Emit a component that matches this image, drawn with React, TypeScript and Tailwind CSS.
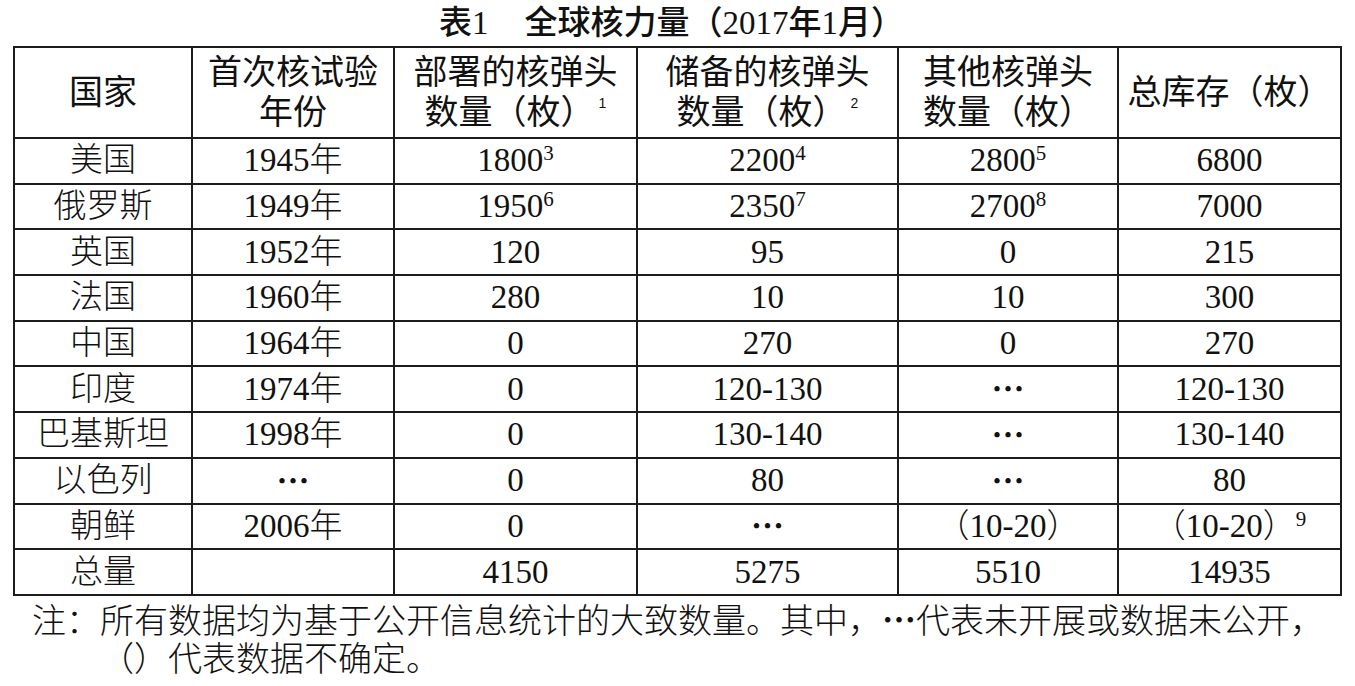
import React from "react";

type Val = string | { v: string; sup: string };

const rows: Val[][] = [
  ["美国", "1945年", { v: "1800", sup: "3" }, { v: "2200", sup: "4" }, { v: "2800", sup: "5" }, "6800"],
  ["俄罗斯", "1949年", { v: "1950", sup: "6" }, { v: "2350", sup: "7" }, { v: "2700", sup: "8" }, "7000"],
  ["英国", "1952年", "120", "95", "0", "215"],
  ["法国", "1960年", "280", "10", "10", "300"],
  ["中国", "1964年", "0", "270", "0", "270"],
  ["印度", "1974年", "0", "120-130", "…", "120-130"],
  ["巴基斯坦", "1998年", "0", "130-140", "…", "130-140"],
  ["以色列", "…", "0", "80", "…", "80"],
  ["朝鲜", "2006年", "0", "…", "（10-20）", { v: "（10-20）", sup: "9" }],
  ["总量", "", "4150", "5275", "5510", "14935"],
];

const colWidths = ["w-[178px]", "w-[202px]", "w-[243px]", "w-[261px]", "w-[220px]", "w-[223px]"];

function Cell({ val }: { val: Val }) {
  if (typeof val === "string") {
    if (val === "…") {
      return <span className="font-[family-name:'Noto_Sans_CJK_SC',sans-serif] font-bold">…</span>;
    }
    return <>{val}</>;
  }
  return (
    <>
      {val.v}
      <sup className="text-[21px] -top-[11px]">{val.sup}</sup>
    </>
  );
}

function HeadSup({ n }: { n: string }) {
  return (
    <sup className="text-[14px] -top-[16px] ml-[4px] font-[family-name:'Liberation_Sans',sans-serif]">{n}</sup>
  );
}

export default function App() {
  return (
    <div className="w-[1355px] h-[686px] bg-white text-[#111] font-[family-name:'Liberation_Serif','Noto_Sans_CJK_SC',serif]">
      <div className="h-[46px] flex items-center justify-center pr-[12px] text-[33px] leading-none">
        <span className="font-medium">表</span>
        <span>1</span>
        <span className="w-[36px]" />
        <span className="font-medium">全球核力量（</span>
        <span>2017</span>
        <span className="font-medium">年</span>
        <span>1</span>
        <span className="font-medium">月）</span>
      </div>

      <table className="ml-[13px] w-[1327px] table-fixed border-collapse border-2 border-[#1c1c1c] text-[33px] leading-none">
        <colgroup>
          {colWidths.map((w, i) => (
            <col key={i} className={w} />
          ))}
        </colgroup>
        <thead>
          <tr className="h-[91px] leading-[40px] text-[34px]">
            <th className="border-2 border-[#1c1c1c] font-normal">国家</th>
            <th className="border-2 border-[#1c1c1c] font-normal">
              首次核试验
              <br />
              年份
            </th>
            <th className="border-2 border-[#1c1c1c] font-normal">
              部署的核弹头
              <br />
              数量（枚）
              <HeadSup n="1" />
            </th>
            <th className="border-2 border-[#1c1c1c] font-normal">
              储备的核弹头
              <br />
              数量（枚）
              <HeadSup n="2" />
            </th>
            <th className="border-2 border-[#1c1c1c] font-normal">
              其他核弹头
              <br />
              数量（枚）
            </th>
            <th className="border-2 border-[#1c1c1c] font-normal">总库存（枚）</th>
          </tr>
        </thead>
        <tbody>
          {rows.map((row, r) => (
            <tr key={r} className="h-[45.7px]">
              {row.map((val, c) => (
                <td key={c} className="border-2 border-[#1c1c1c] text-center font-light p-0">
                  <Cell val={val} />
                </td>
              ))}
            </tr>
          ))}
        </tbody>
      </table>

      <div className="pl-[32px] pt-[4px] text-[34px] leading-[38px] font-light">
        <p>注：所有数据均为基于公开信息统计的大致数量。其中，<span className="font-[family-name:'Noto_Sans_CJK_SC',sans-serif] font-bold">…</span>代表未开展或数据未公开，</p>
        <p className="pl-[68px]">（）代表数据不确定。</p>
      </div>
    </div>
  );
}
